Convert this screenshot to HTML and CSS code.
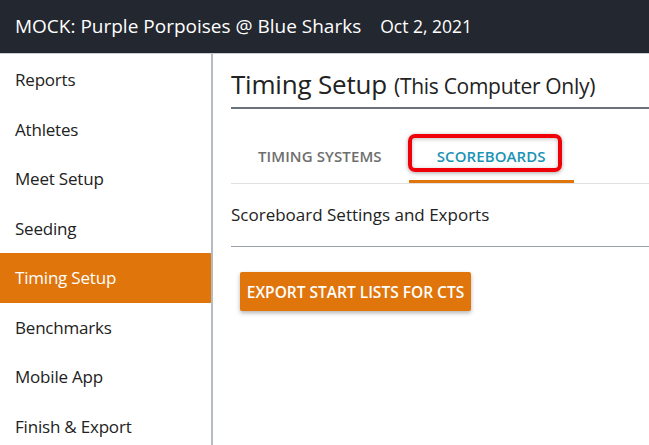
FILE: index.html
```html
<!DOCTYPE html>
<html>
<head>
<meta charset="utf-8">
<link rel="stylesheet" href="styles.css">
</head>
<body>
<header class="topbar">
  <span class="meet-name">MOCK: Purple Porpoises @ Blue Sharks</span>
  <span class="meet-date">Oct 2, 2021</span>
</header>
<div class="layout">
  <nav class="sidebar">
    <div class="nav-item">Reports</div>
    <div class="nav-item">Athletes</div>
    <div class="nav-item">Meet Setup</div>
    <div class="nav-item">Seeding</div>
    <div class="nav-item active">Timing Setup</div>
    <div class="nav-item">Benchmarks</div>
    <div class="nav-item">Mobile App</div>
    <div class="nav-item">Finish &amp; Export</div>
  </nav>
  <main class="main">
    <div class="page-title">
      <span class="title-main">Timing Setup</span>
      <span class="title-sub">(This Computer Only)</span>
    </div>
    <div class="tabs">
      <div class="tab">TIMING SYSTEMS</div>
      <div class="tab tab-active">SCOREBOARDS<span class="highlight"></span></div>
    </div>
    <div class="section-head">Scoreboard Settings and Exports</div>
    <div class="actions">
      <button class="btn">EXPORT START LISTS FOR CTS</button>
    </div>
  </main>
</div>
</body>
</html>
```
FILE: styles.css
```css
* { box-sizing: border-box; }
html, body { margin: 0; padding: 0; }
body {
  width: 649px;
  height: 445px;
  overflow: hidden;
  background: #ffffff;
  font-family: "Open Sans", "Noto Sans", sans-serif;
  color: #222;
}
.topbar {
  height: 54px;
  background: #23272f;
  color: #fff;
  display: flex;
  align-items: baseline;
  padding: 13px 0 0 15px;
  border-bottom: 1px solid #c9ccd1;
  white-space: nowrap;
}
.meet-name { font-size: 19px; }
.meet-date { font-size: 17.5px; margin-left: 19px; }
.layout { display: flex; height: 391px; }
.sidebar {
  width: 213px;
  flex: none;
  border-right: 2px solid #b6bac1;
  padding-top: 1px;
}
.nav-item {
  height: 49.5px;
  display: flex;
  align-items: center;
  padding-left: 15px;
  font-size: 17px;
  color: #222;
  letter-spacing: -0.2px;
}
.nav-item.active { background: #e0750c; color: #fff; }
.main { flex: 1; padding-left: 18px; }
.page-title {
  height: 55px;
  padding-top: 12px;
  border-bottom: 2px solid #6b727c;
  white-space: nowrap;
}
.title-main { font-size: 26px; color: #222; letter-spacing: -0.2px; }
.title-sub { font-size: 21px; color: #222; margin-left: 3px; letter-spacing: -0.3px; }
.tabs {
  display: flex;
  margin-top: 22px;
  border-bottom: 1px solid #e2e2e2;
}
.tab {
  position: relative;
  height: 52px;
  padding: 0 27px;
  display: flex;
  align-items: center;
  font-size: 15px;
  font-weight: 600;
  color: #6e6e6e;
  letter-spacing: 0.1px;
  border-bottom: 3px solid transparent;
  white-space: nowrap;
}
.tab-active { color: #1a93b5; border-bottom-color: #e0750c; padding: 0 28px; }
.highlight {
  position: absolute;
  left: -1px;
  top: 3px;
  width: 154px;
  height: 38px;
  border: 4px solid #f00008;
  border-radius: 7px;
  box-shadow: 0 1px 4px rgba(0,0,0,0.35), inset 0 1px 4px rgba(0,0,0,0.25);
}
.section-head {
  height: 63px;
  display: flex;
  align-items: center;
  font-size: 17px;
  color: #222;
  border-bottom: 1px solid #9aa0a7;
  padding-bottom: 1px;
  white-space: nowrap;
}
.actions { padding: 25px 0 0 9px; }
.btn {
  width: 231px;
  height: 39px;
  background: #e0750c;
  color: #fff;
  border: none;
  border-radius: 2px;
  font-family: "Open Sans", "Noto Sans", sans-serif;
  font-size: 15.5px;
  font-weight: 600;
  letter-spacing: 0;
  padding: 0;
  white-space: nowrap;
  box-shadow: 0 2px 4px rgba(0,0,0,0.3);
}
```
